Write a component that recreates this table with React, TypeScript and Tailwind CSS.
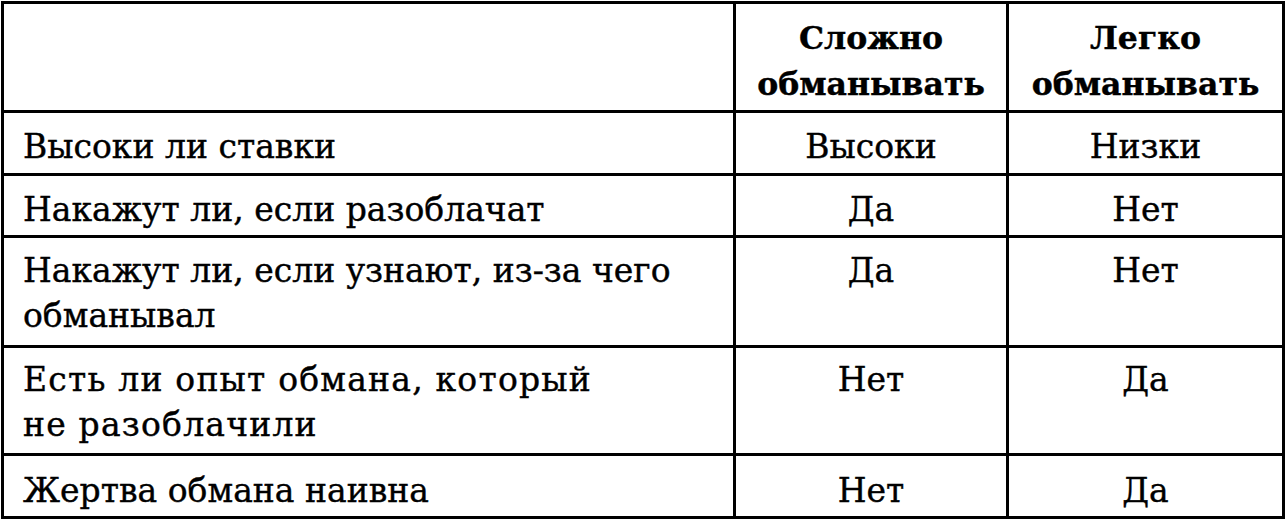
import * as React from 'react';

const rows = [
  { label: ['Высоки ли ставки'], hard: 'Высоки', easy: 'Низки', h: 'h-[60px]', pt: 'pt-[11px]', tr: '' },
  { label: ['Накажут ли, если разоблачат'], hard: 'Да', easy: 'Нет', h: 'h-[59px]', pt: 'pt-[11px]', tr: '' },
  { label: ['Накажут ли, если узнают, из-за чего', 'обманывал'], hard: 'Да', easy: 'Нет', h: 'h-[107px]', pt: 'pt-[10px]', tr: '' },
  { label: ['Есть ли опыт обмана, который', 'не разоблачили'], hard: 'Нет', easy: 'Да', h: 'h-[105px]', pt: 'pt-[9px]', tr: 'tracking-[1.2px]' },
  { label: ['Жертва обмана наивна'], hard: 'Нет', easy: 'Да', h: 'h-[60px]', pt: 'pt-[12px]', tr: '' },
];

export default function App() {
  return (
    <div className="w-[1287px] h-[522px] bg-white pl-[1px] pt-[1px] font-['DejaVu_Serif',serif]">
      <div className="grid w-[1284px] grid-cols-[729px_270px_273px] gap-[3px] bg-black p-[3px] text-[33px] leading-[45px] text-black [-webkit-text-stroke:0.4px_black]">
        <div className="h-[106px] bg-white" />
        <div className="flex h-[106px] flex-col items-center bg-white pt-[11px] text-[31.5px] leading-[46px] font-bold">
          <span>Сложно</span>
          <span>обманывать</span>
        </div>
        <div className="flex h-[106px] flex-col items-center bg-white pt-[11px] text-[31.5px] leading-[46px] font-bold">
          <span>Легко</span>
          <span>обманывать</span>
        </div>
        {rows.map((r, i) => (
          <React.Fragment key={i}>
            <div className={`${r.h} ${r.pt} ${r.tr} bg-white pl-[19px]`}>
              {r.label.map((l, j) => (
                <div key={j}>{l}</div>
              ))}
            </div>
            <div className={`${r.h} ${r.pt} bg-white text-center`}>{r.hard}</div>
            <div className={`${r.h} ${r.pt} bg-white text-center`}>{r.easy}</div>
          </React.Fragment>
        ))}
      </div>
    </div>
  );
}
